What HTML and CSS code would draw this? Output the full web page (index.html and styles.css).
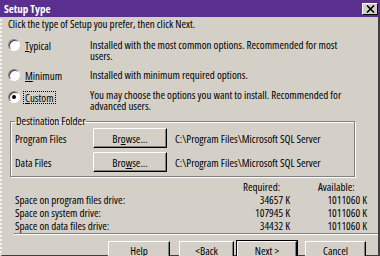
FILE: index.html
```html
<!DOCTYPE html>
<html>
<head>
<meta charset="utf-8">
<link rel="stylesheet" href="styles.css">
</head>
<body>
<div class="window">
  <div class="titlebar">
    <span class="title">Setup Type</span>
    <span class="close"><svg width="9" height="8" viewBox="0 0 9 8"><path d="M1 0.5 L8 7.5 M8 0.5 L1 7.5" stroke="#000" stroke-width="1.6"/></svg></span>
  </div>
  <div class="content">
    <p class="intro">Click the type of Setup you prefer, then click Next.</p>
    <div class="options">
      <div class="opt"><span class="radio"></span><span class="lbl"><u>T</u>ypical</span></div>
      <div class="desc">Installed with the most common options. Recommended for most users.</div>
      <div class="opt"><span class="radio"></span><span class="lbl"><u>M</u>inimum</span></div>
      <div class="desc">Installed with minimum required options.</div>
      <div class="opt third"><span class="radio checked"></span><span class="lbl focus"><u>C</u>ustom</span></div>
      <div class="desc third">You may choose the options you want to install. Recommended for advanced users.</div>
    </div>
    <fieldset class="group">
      <legend>Destination Folder</legend>
      <div class="frow"><span class="flbl">Program Files</span><span class="btn browse">Br<u>o</u>wse...</span><span class="path">C:\Program Files\Microsoft SQL Server</span></div>
      <div class="frow"><span class="flbl">Data Files</span><span class="btn browse">Bro<u>w</u>se...</span><span class="path">C:\Program Files\Microsoft SQL Server</span></div>
    </fieldset>
    <div class="space">
      <span></span><span class="hdr h1">Required:</span><span class="hdr h2">Available:</span>
      <span>Space on program files drive:</span><span class="num">34657 K</span><span class="num">1011060 K</span>
      <span>Space on system drive:</span><span class="num">107945 K</span><span class="num">1011060 K</span>
      <span>Space on data files drive:</span><span class="num">34432 K</span><span class="num">1011060 K</span>
    </div>
  </div>
  <div class="sep"></div>
  <div class="buttons">
    <span class="btn help"><u>H</u>elp</span>
    <span class="btn back">&lt; <u>B</u>ack</span>
    <span class="btn next def"><u>N</u>ext &gt;</span>
    <span class="btn cancel">Cancel</span>
  </div>
</div>
</body>
</html>
```
FILE: styles.css
```css
* { box-sizing: border-box; }
body {
  margin: 0;
  padding: 0;
  width: 380px;
  height: 256px;
  overflow: hidden;
  background: #d4d0c8;
  color: #000;
}
.window, .window * {
  font-family: "Open Sans", "Liberation Sans", Arial, sans-serif;
  font-stretch: 75%;
  font-variation-settings: "wdth" 75;
  font-size: 11px;
  font-weight: 400;
}
.window {
  width: 380px;
  height: 256px;
  border-left: 2px dotted #f4f4f4;
  border-right: 2px solid #404040;
  border-bottom: 1px solid #404040;
  display: flex;
  flex-direction: column;
}
.titlebar {
  height: 17px;
  flex: none;
  background: #5b2f8d;
  display: flex;
  align-items: center;
  justify-content: space-between;
  margin-left: -2px;
  margin-right: -2px;
}
.window .title {
  color: #fff;
  font-weight: 700;
  font-variation-settings: "wdth" 75, "wght" 700;
  padding-left: 4px;
  line-height: 12px;
}
.close {
  width: 16px;
  height: 12px;
  background: #d4d0c8;
  border: 1px solid;
  border-color: #fff #000 #000 #fff;
  display: flex;
  align-items: center;
  justify-content: center;
  margin-right: 2px;
}
.content {
  padding: 0 0 0 6px;
}
.intro {
  margin: 1px 0 0 0;
  line-height: 12px;
}
.options {
  display: grid;
  grid-template-columns: 82px 268px;
  row-gap: 8px;
  margin-top: 9px;
  line-height: 11px;
}
.opt {
  display: flex;
  align-items: center;
  height: 12px;
}
.opt.third { align-self: start; margin-top: 2px; }
.radio {
  width: 12px;
  height: 12px;
  border-radius: 50%;
  background: #fff;
  border: 1px solid;
  border-color: #808080 #fff #fff #808080;
  box-shadow: inset 1px 1px 0 #404040;
  margin-right: 4px;
  position: relative;
  flex: none;
}
.radio.checked::after {
  content: "";
  position: absolute;
  left: 3px;
  top: 3px;
  width: 4px;
  height: 4px;
  border-radius: 50%;
  background: #000;
}
.lbl { padding: 0 1px; line-height: 11px; }
.lbl.focus { outline: 1px dotted #000; }
.group {
  margin: 5px 23px 0 2px;
  padding: 0 6px 2px 4px;
  border: 1px solid #808080;
  box-shadow: 1px 1px 0 #fff, inset 1px 1px 0 #fff;
  min-width: 0;
}
.group legend {
  padding: 0 1px;
  margin-left: 0;
  line-height: 10px;
}
.frow {
  display: flex;
  align-items: center;
  height: 24px;
}
.flbl { width: 78px; }
.btn {
  display: inline-flex;
  align-items: center;
  justify-content: center;
  height: 20px;
  background: #d4d0c8;
  border: 1px solid;
  border-color: #fff #000 #000 #fff;
  box-shadow: inset -1px -1px 0 #808080;
}
.browse { width: 74px; margin-right: 8px; }
.space {
  display: grid;
  grid-template-columns: 210px 65px 77px;
  line-height: 13px;
  margin-top: 3px;
  padding-left: 7px;
}
.hdr.h1 { padding-left: 18px; }
.hdr.h2 { padding-left: 28px; }
.num { text-align: right; }
.sep {
  margin: 1px 0 0 12px;
  height: 2px;
  border-top: 1px solid #808080;
  border-bottom: 1px solid #fff;
  flex: none;
}
.buttons {
  display: flex;
  margin-top: 6px;
  padding-left: 106px;
}
.buttons .btn { height: 18px; }
.btn.help { width: 62px; margin-right: 9px; }
.btn.back { width: 55px; margin-right: 3px; }
.btn.next { width: 60px; margin-right: 8px; }
.btn.cancel { width: 61px; }
.btn.def { outline: 1px solid #000; }
```
